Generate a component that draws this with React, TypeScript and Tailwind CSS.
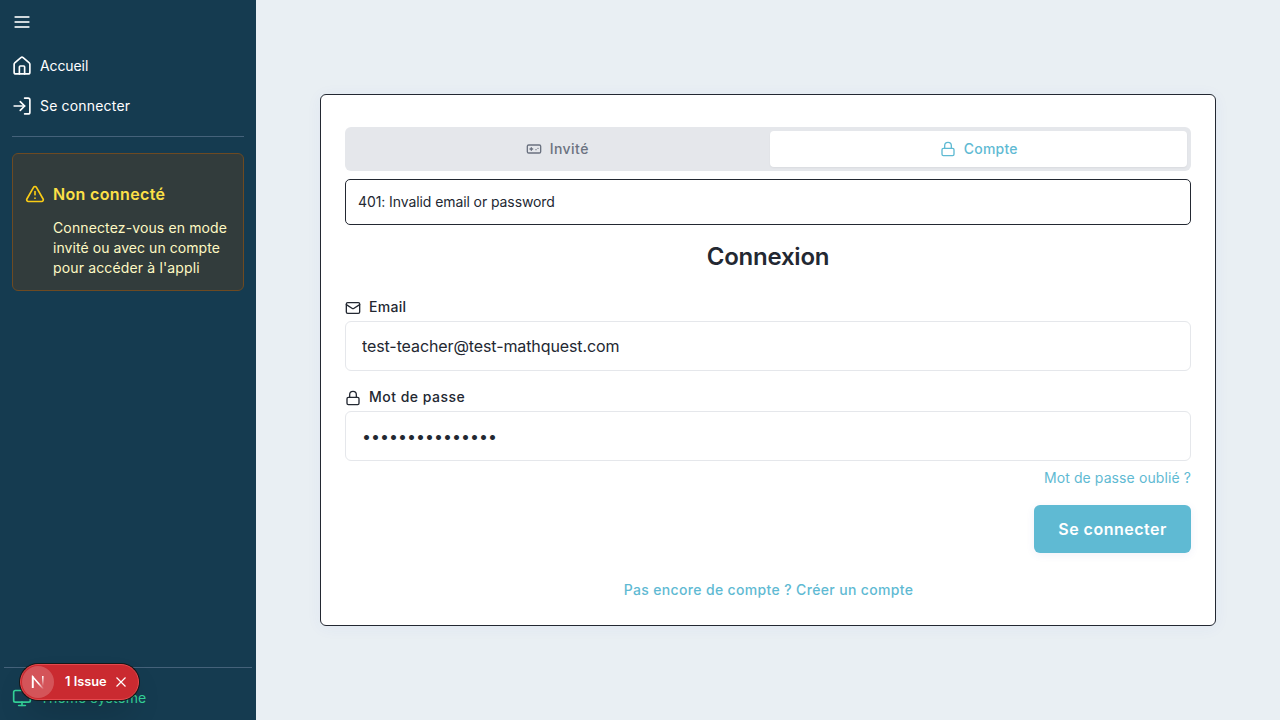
import { TriangleAlert, Gamepad, House, Lock, LogIn, Mail, Monitor } from "lucide-react";

function MenuIcon() {
  return (
    <svg className="size-5" viewBox="0 0 24 24" fill="none" stroke="currentColor" strokeWidth="2.4" strokeLinecap="round">
      <path d="M4 6h16M4 12h16M4 18h16" />
    </svg>
  );
}

function Sidebar() {
  return (
    <aside className="flex h-full w-64 shrink-0 flex-col bg-[#153b50] text-sm text-white">
      <button className="mt-3 ml-3 flex size-5 items-center text-white/80">
        <MenuIcon />
      </button>
      <nav className="mt-4 flex flex-col gap-1 px-3">
        <a className="flex h-9 items-center gap-2 tracking-[-0.1px]">
          <House className="size-5 scale-105" strokeWidth={1.9} />
          Accueil
        </a>
        <a className="flex h-9 items-center gap-2 tracking-[0.18px]">
          <LogIn className="size-5 scale-105" strokeWidth={1.9} />
          Se connecter
        </a>
      </nav>
      <hr className="mx-3 mt-3 border-[#45627a]" />
      <section className="mx-3 mt-4 flex h-[138px] gap-2 rounded-md border border-[#6d4a22] bg-[#323c3c] px-3 pt-7">
        <TriangleAlert className="mt-0.5 size-5 shrink-0 text-[#facc15]" />
        <div>
          <h2 className="text-base font-semibold tracking-[0.35px] text-[#fde047]">Non connecté</h2>
          <p className="mt-3 text-sm leading-5 whitespace-nowrap text-[#fef9c3]">
            <span className="tracking-[0.13px]">Connectez-vous en mode</span>
            <br />
            <span className="tracking-[0.06px]">invité ou avec un compte</span>
            <br />
            <span className="tracking-[0.15px]">pour accéder à l'appli</span>
          </p>
        </div>
      </section>
      <footer className="mx-1 mt-auto flex h-[53px] items-center gap-2 border-t border-[#45627a] px-2 pt-2 tracking-[0.06px] text-[#34d399]">
        <Monitor className="size-5" />
        Thème système
      </footer>
    </aside>
  );
}

function IssueBadge() {
  return (
    <div className="absolute top-[664px] left-5 flex h-9 w-[119px] items-center rounded-full border border-[#e5484d] bg-[#ca2a30] pl-[1px] text-white shadow-[0_0_0_1px_#171717,0_16px_32px_-8px_rgba(0,0,0,0.24)]">
      <span className="flex size-8 items-center justify-center rounded-full bg-white/20">
        <svg width="32" height="32" viewBox="0 0 32 32" fill="none" strokeWidth="1.6">
          <defs>
            <linearGradient id="diagonal" x1="17" y1="17" x2="21.5" y2="23" gradientUnits="userSpaceOnUse">
              <stop stopColor="white" />
              <stop offset="1" stopColor="white" stopOpacity="0" />
            </linearGradient>
            <linearGradient id="stem" x1="21" y1="10" x2="21" y2="20" gradientUnits="userSpaceOnUse">
              <stop stopColor="white" />
              <stop offset="1" stopColor="white" stopOpacity="0" />
            </linearGradient>
          </defs>
          <path d="M10.7 22V10.8L21.6 23.2" stroke="url(#diagonal)" />
          <path d="M10.7 22V10" stroke="white" />
          <path d="M20.8 10V20" stroke="url(#stem)" />
        </svg>
      </span>
      <span className="ml-[11px] w-[42px] text-[12.8px] leading-none font-semibold whitespace-nowrap">1 Issue</span>
      <svg className="ml-[9px]" width="10" height="10" viewBox="0 0 10 10" stroke="currentColor" strokeWidth="1.2">
        <path d="M.5.5l9 9M9.5.5l-9 9" />
      </svg>
    </div>
  );
}

export default function App() {
  return (
    <div className="relative flex h-[720px] w-[1280px] overflow-hidden bg-[#e9eff3] font-['Inter',sans-serif] text-[#232832]">
      <Sidebar />
      <main className="flex flex-1 items-center justify-center">
        <div className="flex h-[532px] w-[896px] flex-col rounded-md border border-[#232832] bg-white px-6 pt-8 shadow-[0_2px_16px_rgba(60,72,220,0.05)]">
          <div className="flex h-11 gap-1 rounded-md bg-[#e5e7eb] p-1 text-sm font-medium">
            <button className="flex flex-1 items-center justify-center gap-2 tracking-[0.45px] text-[#6b7280]">
              <Gamepad className="size-4" />
              Invité
            </button>
            <button className="flex flex-1 items-center justify-center gap-2 rounded-sm bg-white pl-px tracking-[0.2px] text-[#5fbad3] shadow-[0_1px_2px_rgba(0,0,0,0.05)]">
              <Lock className="size-4" />
              Compte
            </button>
          </div>
          <div className="mt-2 flex h-[46px] items-center rounded-[5px] border border-[#232832] px-3 text-sm tracking-[-0.09px]">
            401: Invalid email or password
          </div>
          <h1 className="mt-4 text-center text-2xl leading-8 font-semibold tracking-[-0.22px]">Connexion</h1>
          <form className="mt-6 flex flex-col">
            <label className="flex h-5 items-center gap-2 text-sm font-medium tracking-[0.28px]">
              <Mail className="relative top-px size-4" />
              Email
            </label>
            <input className="mt-1 h-[50px] rounded-md border border-[#e5e7eb] px-4 text-base tracking-[-0.1px]" type="text" defaultValue="test-teacher@test-mathquest.com" />
            <label className="mt-4 flex h-5 items-center gap-2 text-sm font-medium tracking-[0.48px]">
              <Lock className="relative top-px size-4" />
              Mot de passe
            </label>
            <input className="mt-1 h-[50px] rounded-md border border-[#e5e7eb] px-4 text-base" type="password" defaultValue="123456789012345" />
            <a className="mt-[7px] self-end text-sm leading-5 tracking-[0.1px] text-[#5fbad3]">Mot de passe oublié ?</a>
            <button type="button" className="mt-[17px] flex h-12 w-[157px] items-center justify-center self-end rounded-md bg-[#5fbad3] text-base font-semibold tracking-[0.49px] text-white shadow-[0_2px_8px_rgba(60,72,180,0.08)]">
              Se connecter
            </button>
          </form>
          <a className="mt-[27px] pl-px text-center text-sm leading-5 font-medium tracking-[0.35px] text-[#5fbad3]">
            Pas encore de compte ? Créer un compte
          </a>
        </div>
      </main>
      <IssueBadge />
    </div>
  );
}
